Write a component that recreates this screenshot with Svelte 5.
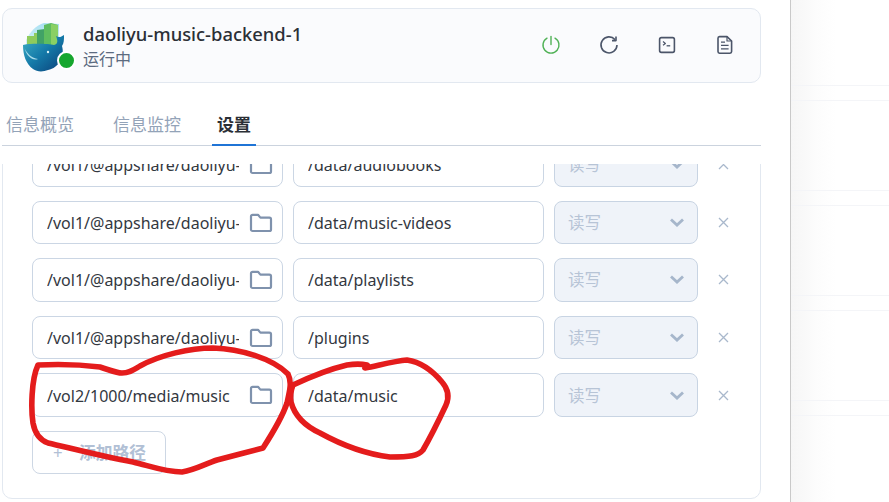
<script>
  const rows = [
    { host: "/vol1/@appshare/daoliyu-music-backend/audiobooks", path: "/data/audiobooks" },
    { host: "/vol1/@appshare/daoliyu-music-backend/videos", path: "/data/music-videos" },
    { host: "/vol1/@appshare/daoliyu-music-backend/playlists", path: "/data/playlists" },
    { host: "/vol1/@appshare/daoliyu-music-backend/plugins", path: "/plugins" },
    { host: "/vol2/1000/media/music", path: "/data/music" }
  ];
  const sideRows = [1, 2, 3, 4];
</script>

<div class="page">
  <main class="main">
    <header class="head">
      <div class="logo">
        <svg width="44" height="50" viewBox="0 0 44 50">
          <defs>
            <linearGradient id="whale" x1="0" y1="0" x2="1" y2="1">
              <stop offset="0" stop-color="#3fb0c6" />
              <stop offset="0.5" stop-color="#1479a8" />
              <stop offset="1" stop-color="#0b3f78" />
            </linearGradient>
            <linearGradient id="halo" x1="0" y1="0" x2="0" y2="1">
              <stop offset="0" stop-color="#a9e0f2" />
              <stop offset="1" stop-color="#dff4f9" />
            </linearGradient>
          </defs>
          <path d="M3 17 C7 9 13 2 21 0 L36 1 L36 24 L3 24 Z" fill="url(#halo)" />
          <path d="M4 13 L11 13 L11 10 L22 10 L22 22 L4 22 Z" fill="#8fcb5c" />
          <path d="M14 7 L22 6 L22 22 L14 22 Z" fill="#41a266" />
          <path d="M21 2 L28 0 L35 2 L35 22 L21 22 Z" fill="#5fbd5f" />
          <path d="M28 1 L35 2 L35 22 L28 22 Z" fill="#8ad064" />
          <path d="M0 22 C10 20 26 21 31 22 C35 21 35 18 33 13 C36 15 38 14 41 12 C41 17 41 20 39 23 C42 33 36 45 25 47 C20 49 14 49 10 46 C3 41 0 32 0 22 Z" fill="url(#whale)" />
          <path d="M1.5 25 C4 31 9 35 15 36 C10 38 4 34 1.5 25 Z" fill="#a9dcea" />
          <circle cx="25" cy="29" r="1.2" fill="#d8f0f6" />
        </svg>
        <span class="dot"></span>
      </div>
      <div class="title">
        <div class="name">daoliyu-music-backend-1</div>
        <div class="state">运行中</div>
      </div>
      <div class="actions">
        <button class="power" aria-label="停止">
          <svg width="20" height="20" viewBox="0 0 20 20" fill="none" stroke="currentColor" stroke-width="1.4" stroke-linecap="round">
            <path d="M6 3.2 A8 8 0 1 0 14 3.2" />
            <path d="M10 1.5 V9.5" />
          </svg>
        </button>
        <button aria-label="重启">
          <svg width="20" height="20" viewBox="0 0 20 20" fill="none" stroke="currentColor" stroke-width="1.6" stroke-linejoin="round">
            <path d="M16 4.6 A8 8 0 1 0 18 10" />
            <path d="M17 1.6 V5.6 H13" />
          </svg>
        </button>
        <button aria-label="终端">
          <svg width="20" height="20" viewBox="0 0 20 20" fill="none" stroke="currentColor" stroke-width="1.6" stroke-linejoin="round">
            <rect x="2.6" y="2.6" width="14.8" height="14.8" rx="1.8" />
            <path d="M6 6.6 L8.4 8.4 L6 10.2" stroke-width="1.2" />
            <path d="M9.6 10.8 H13.2" stroke-width="1.3" />
          </svg>
        </button>
        <button aria-label="日志">
          <svg width="20" height="20" viewBox="0 0 20 20" fill="none" stroke="currentColor" stroke-width="1.6" stroke-linejoin="round">
            <path d="M4.5 1.6 H12 L16.6 6 V16.6 A1.6 1.6 0 0 1 15 18.2 H4.5 A1.6 1.6 0 0 1 3 16.6 V3.2 A1.6 1.6 0 0 1 4.5 1.6 Z" />
            <path d="M12 1.6 V6 H16.6" stroke-width="1.2" />
            <path d="M6 7.2 H10 M6 10.4 H13.6 M6 13.8 H13.6" stroke-width="1.3" />
          </svg>
        </button>
      </div>
    </header>

    <nav class="tabs">
      <span class="tab">信息概览</span>
      <span class="tab">信息监控</span>
      <span class="tab active">设置</span>
    </nav>

    <div class="scroller">
      <section class="card">
        {#each rows as row}
          <div class="row">
            <div class="field">
              <input class="host" readonly value={row.host} />
              <svg class="folder" width="24" height="20" viewBox="0 0 24 20" fill="none" stroke="#7f92ad" stroke-width="2.2" stroke-linejoin="round">
                <path d="M2 3.4 A1.6 1.6 0 0 1 3.6 1.8 H9 L11.4 4.6 H20.4 A1.6 1.6 0 0 1 22 6.2 V16.4 A1.6 1.6 0 0 1 20.4 18 H3.6 A1.6 1.6 0 0 1 2 16.4 Z" />
              </svg>
            </div>
            <input class="path" readonly value={row.path} />
            <div class="mode">
              <span>读写</span>
              <svg width="14" height="9" viewBox="0 0 14 9" fill="none" stroke="#a6b6cb" stroke-width="2.8">
                <path d="M1 1.4 L7 7 L13 1.4" />
              </svg>
            </div>
            <button class="del" aria-label="删除">
              <svg width="11" height="11" viewBox="0 0 11 11" fill="none" stroke="#a9b8cc" stroke-width="1.3">
                <path d="M1 1 L10 10 M10 1 L1 10" />
              </svg>
            </button>
          </div>
        {/each}
        <button class="add"><span class="plus">+</span>添加路径</button>
      </section>
    </div>

    <svg class="marks" width="460" height="140" viewBox="0 0 460 140" fill="none" stroke="#e41c1c" stroke-width="5.6" stroke-linejoin="round" stroke-linecap="round">
      <path d="M38 5 C58 4 84 5 100 7 C110 10 116 13 122 13 C128 13 132 11 140 6 C160 -5 190 -12 213 -12 C240 -11 272 -2 288 14 C292 22 290 30 287 43 C282 58 272 74 263 88 C248 92 232 96 217 100 C205 104 195 110 182 112 C165 112 150 106 133 102 C100 96 70 88 48 83 C40 80 35 74 33 63 C31 50 31 20 38 5 Z" />
      <path d="M293 25 C310 17 330 9 347 5 C354 4 362 4 367 5 L365 8 C380 5 395 1 407 0 C420 2 432 10 442 22 C449 30 449 38 446 45 C438 62 430 78 423 90 C418 96 410 97 390 97 C365 94 340 84 320 73 C305 66 295 57 291 42 C290 35 291 30 293 25 Z" />
    </svg>
  </main>

  <aside class="side">
    {#each sideRows as r}
      <div class="side-row"></div>
    {/each}
  </aside>
</div>

<style>
  :global(body) {
    margin: 0;
    overflow: hidden;
    background: #fff;
  }

  .page {
    display: flex;
    width: 889px;
    height: 502px;
    overflow: hidden;
    font-family: "Noto Sans", "Noto Sans CJK SC", sans-serif;
  }

  .main {
    position: relative;
    box-sizing: border-box;
    width: 791px;
    height: 502px;
    flex-shrink: 0;
    padding: 8px 29px 0 2px;
    border-right: 1px solid #c9c9c9;
    background: #fff;
  }

  .head {
    display: flex;
    align-items: center;
    box-sizing: border-box;
    height: 75px;
    padding: 0 25px 0 20px;
    border: 1px solid #e2e8f0;
    border-radius: 10px;
    background: #fafbfd;
  }

  .logo {
    position: relative;
    width: 44px;
    height: 50px;
    margin-top: 4px;
  }

  .dot {
    position: absolute;
    left: 34px;
    top: 28px;
    width: 15px;
    height: 15px;
    border: 2.5px solid #fff;
    border-radius: 50%;
    background: #16a62e;
  }

  .title {
    margin-left: 16px;
  }

  .name {
    margin-top: 2px;
    font-size: 18.4px;
    font-weight: 500;
    line-height: 24px;
    color: #2b2f36;
  }

  .state {
    margin-top: 1px;
    font-size: 16px;
    line-height: 24px;
    color: #5c6b80;
  }

  .actions {
    display: flex;
    gap: 38px;
    margin-left: auto;
    margin-top: -1px;
  }

  .actions button {
    display: flex;
    padding: 0;
    border: none;
    background: none;
    color: #4b5569;
  }

  .actions .power {
    color: #4fb155;
  }

  .tabs {
    display: flex;
    gap: 29px;
    box-sizing: border-box;
    height: 34px;
    margin-top: 29px;
    border-bottom: 1px solid #cbd3de;
  }

  .tab {
    box-sizing: border-box;
    height: 34px;
    padding: 0 5px;
    font-size: 17px;
    line-height: 26px;
    color: #93a3b8;
  }

  .tab:first-child {
    padding-left: 4px;
  }

  .tab.active {
    margin-left: -3px;
    padding: 0 5px;
    border-bottom: 2px solid #1f74d6;
    font-weight: 700;
    color: #2b2f36;
  }

  .scroller {
    height: 338px;
    margin-top: 18px;
    overflow: hidden;
  }

  .card {
    box-sizing: border-box;
    display: flex;
    flex-direction: column;
    gap: 14px;
    height: 357px;
    margin-top: -22px;
    padding: 0 0 0 29px;
    border: 1px solid #e2e8f0;
    border-radius: 10px;
  }

  .row {
    display: flex;
    align-items: center;
    gap: 10px;
    height: 43.6px;
  }

  .field {
    position: relative;
    width: 251px;
    height: 100%;
  }

  input {
    box-sizing: border-box;
    height: 100%;
    padding: 1px 14px 0;
    border: 1px solid #cbd6e4;
    border-radius: 8px;
    outline: none;
    background: #fff;
    font: 400 16px "Noto Sans", "Noto Sans CJK SC", sans-serif;
    color: #33383f;
  }

  .host {
    width: 100%;
    padding-right: 43px;
  }

  .folder {
    position: absolute;
    right: 10px;
    top: 12px;
  }

  .path {
    width: 251px;
  }

  .mode {
    display: flex;
    align-items: center;
    justify-content: space-between;
    box-sizing: border-box;
    width: 144px;
    height: 100%;
    padding: 0 13px 0 14px;
    border: 1px solid #c8d4e3;
    border-radius: 8px;
    background: #eff3f9;
    font-size: 16.5px;
    color: #b7c4d6;
  }

  .mode span {
    margin-top: -1px;
    margin-left: -1px;
  }

  .del {
    display: flex;
    margin-left: 10px;
    padding: 0;
    border: none;
    background: none;
  }

  .add {
    display: flex;
    align-items: center;
    box-sizing: border-box;
    width: 134px;
    height: 43px;
    padding: 0 0 0 20px;
    border: 1px solid #cdd7e4;
    border-radius: 8px;
    background: #fff;
    font: 700 16.8px "Noto Sans", "Noto Sans CJK SC", sans-serif;
    color: #b1c0d5;
  }

  .plus {
    width: 26px;
    font-weight: 400;
    text-align: left;
  }

  .marks {
    position: absolute;
    left: 0;
    top: 360px;
    overflow: visible;
    pointer-events: none;
  }

  .side {
    flex: 1;
    padding-top: 85px;
    background: linear-gradient(90deg, #f6f6f6 0, #fcfcfc 25px, #fff 45px);
  }

  .side-row {
    box-sizing: border-box;
    height: 16px;
    margin-bottom: 89px;
    border-top: 1px solid #f4f5f8;
    border-bottom: 1px solid #f4f5f8;
  }
</style>
